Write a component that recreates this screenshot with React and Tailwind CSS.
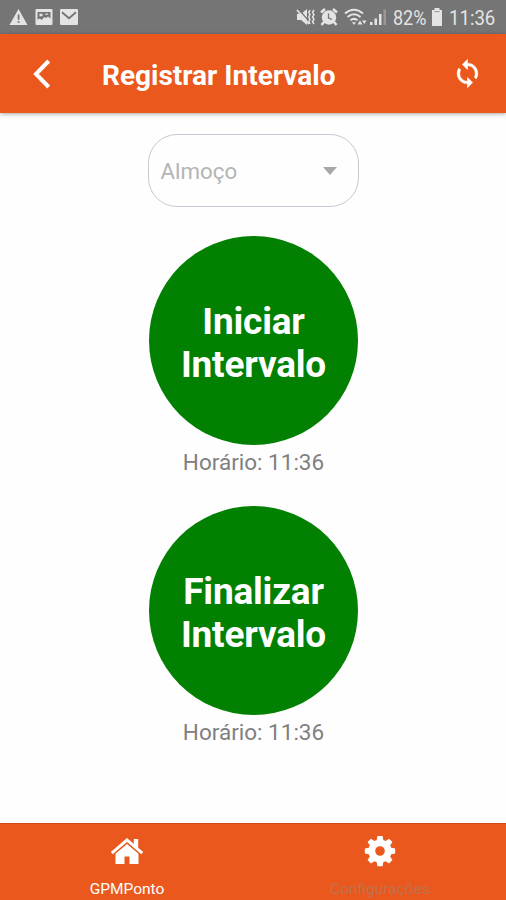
function StatusBar() {
  return (
    <div className="flex h-[34px] shrink-0 items-center bg-[#757575] text-[#e4e4e4]">
      <svg className="ml-[9px] h-[18px] w-[19px]" viewBox="0 0 19 18">
        <path d="M9.5 1 18.5 17H.5z" fill="currentColor" />
        <path d="M8.7 6.5h1.8v5.3H8.7zM8.7 13h1.8v1.8H8.7z" fill="#757575" />
      </svg>
      <svg className="ml-[7px] h-[18px] w-[18px]" viewBox="0 0 18 18">
        <rect x=".5" y="1" width="17" height="16" rx="1" fill="currentColor" />
        <path d="M2.5 4h13v6.500l-2.500-2-2 1.500-1.500-1-3 3-1.500-1.500-2.500 1z" fill="#757575" />
        <path d="M4.500 5.800h3v2.400h-3zM9.500 7l2.500-2 1.500 1.500z" fill="currentColor" />
      </svg>
      <svg className="ml-[6px] h-[18px] w-[20px]" viewBox="0 0 20 18">
        <rect x="1" y="1" width="18" height="16" rx="1.200" fill="currentColor" />
        <path d="m3 4.200 7 6 7-6" fill="none" stroke="#757575" strokeWidth="1.800" />
      </svg>
      <svg className="ml-[217px] h-[20px] w-[20px]" viewBox="0 0 20 20">
        <path d="M1 7h4l6-5v16l-6-5H1z" fill="currentColor" />
        <path d="m2.500 2 12 14" stroke="#757575" strokeWidth="1.200" />
        <path d="m1 3 12 14" stroke="currentColor" strokeWidth="1.800" />
        <path d="m14 3-1.200 2.300L14 7.600 12.800 10l1.200 2.300-1.200 2.300L14 17M18 3l-1.500 2.300L18 7.600 16.500 10l1.500 2.300-1.500 2.300L18 17" fill="none" stroke="currentColor" strokeWidth="1.500" />
      </svg>
      <svg className="ml-[4px] h-[20px] w-[18px]" viewBox="0 0 18 20">
        <circle cx="9" cy="10.500" r="7.200" fill="currentColor" />
        <path d="m1 5.500 4-3.500M17 5.500 13 2M4 15l-2.500 3M14 15l2.500 3" stroke="currentColor" strokeWidth="2.600" />
        <path d="M8.500 6.500v4.500l3.500 1.500" fill="none" stroke="#757575" strokeWidth="1.300" />
      </svg>
      <svg className="ml-[6px] h-[20px] w-[23px]" viewBox="0 0 23 20">
        <g fill="none" stroke="currentColor" strokeWidth="2">
          <path d="M1 6.500Q10-1 19 6.500" />
          <path d="M3.500 10Q10 4.500 16.500 10" />
          <path d="M6.500 13.300Q10 10.500 13.500 13.300" />
        </g>
        <path d="m8 15.300 2 2.700 2-2.700zM13.500 17.500l2.500-4 2.500 4zM18 13.500h4.500l-2.200 3.500z" fill="currentColor" />
      </svg>
      <svg className="ml-[2px] h-[20px] w-[18px]" viewBox="0 0 18 20">
        <path d="M1 15h2.500v3H1zM5.500 11.500H8V18H5.500zM10 7h2.500v11H10z" fill="currentColor" />
        <path d="M14.500 2.500H17V18h-2.500z" fill="#989898" />
      </svg>
      <span className="ml-[6px] w-[34px] origin-left scale-x-[.90] whitespace-nowrap pt-[2px] text-[20px] leading-none">82%</span>
      <svg className="ml-[4px] h-[20px] w-[12px]" viewBox="0 0 12 20">
        <path d="M3.500 1h5v2H11v16H1V3h2.500z" fill="currentColor" />
        <path d="M3.500 4.600h5" stroke="#959595" strokeWidth="1" />
      </svg>
      <span className="ml-[6px] origin-left scale-x-[.93] whitespace-nowrap pt-[2px] text-[20px] leading-none">11:36</span>
    </div>
  )
}

function Header() {
  return (
    <header className="z-10 flex h-[79px] shrink-0 items-center bg-[#eb581d] text-white shadow-[0_1px_4px_rgba(0,0,0,0.35)]">
      <svg className="ml-[32px] h-[30px] w-[20px]" viewBox="0 0 20 30" fill="none" stroke="currentColor" strokeWidth="4">
        <path d="M16.700 2 4 15l12.700 13" />
      </svg>
      <h1 className="ml-[50px] mt-[4px] w-[234px] whitespace-nowrap text-[28px] font-bold leading-none">Registrar Intervalo</h1>
      <svg className="ml-[116px] h-[31px] w-[31px]" viewBox="0 0 24 24" fill="currentColor" stroke="currentColor" strokeWidth=".4">
        <path d="M12 4V1L8 5l4 4V6c3.310 0 6 2.690 6 6 0 1.010-.25 1.970-.7 2.800l1.460 1.460A7.930 7.930 0 0 0 20 12c0-4.420-3.580-8-8-8zm0 14c-3.310 0-6-2.690-6-6 0-1.010.25-1.970.7-2.800L5.240 7.740A7.930 7.930 0 0 0 4 12c0 4.420 3.580 8 8 8v3l4-4-4-4v3z" />
      </svg>
    </header>
  )
}

function PunchButton({ action, time }) {
  return (
    <section className="flex h-[270px] flex-col items-center">
      <button className="flex h-[209px] w-[209px] shrink-0 flex-col items-center justify-center rounded-full bg-[#028002] pl-[1px] pt-[4px] text-[37px] font-bold leading-[43px] tracking-[-0.200px] text-white">
        <span>{action}</span>
        <span>Intervalo</span>
      </button>
      <p className="mt-[3px] pl-[1px] text-[22.500px] leading-[28px] text-[#808080]">Horário: {time}</p>
    </section>
  )
}

function BottomNav() {
  return (
    <nav className="grid h-[77px] shrink-0 grid-cols-2 border-t border-[#cf4a17] bg-[#eb581d] text-white">
      <div className="flex flex-col items-center pt-[12px]">
        <svg className="h-[30px] w-[34px]" viewBox="0 0 34 30" fill="currentColor">
          <path d="M17 2 .800 16l1.900 2.200L17 6l14.300 12.200 1.900-2.200-5-4.300V3h-4.400v4.900z" />
          <path d="M17 8 5.500 17.800V28h9v-7.500h5V28h9V17.800z" />
        </svg>
        <span className="mt-[15px] pl-[1px] text-[15.500px] leading-[16px]">GPMPonto</span>
      </div>
      <div className="flex flex-col items-center pt-[9px]">
        <svg className="h-[36px] w-[36px]" viewBox="0 0 24 24" fill="currentColor">
          <path fillRule="evenodd" d="m10.300 2-.5 2.600-1.600.7L6 3.800 3.700 6l1.500 2.200-.7 1.600-2.600.5v3.400l2.600.5.7 1.600L3.700 18 6 20.300l2.200-1.500 1.600.7.5 2.600h3.400l.5-2.600 1.600-.7 2.200 1.500 2.300-2.300-1.500-2.200.7-1.600 2.600-.5v-3.400l-2.600-.5-.7-1.600L20.300 6 18 3.800l-2.200 1.500-1.600-.7-.5-2.600zM12 8.800a3.200 3.200 0 1 1 0 6.400 3.200 3.200 0 0 1 0-6.400z" />
        </svg>
        <span className="mt-[12px] pl-[1px] text-[15.500px] leading-[16px] text-[#c0714d]">Configurações</span>
      </div>
    </nav>
  )
}

export default function App() {
  return (
    <div className="flex h-[900px] w-[506px] flex-col overflow-hidden bg-[#fefefe] font-[Roboto,sans-serif]">
      <StatusBar />
      <Header />
      <main className="flex min-h-0 flex-1 flex-col items-center pt-[21px]">
        <button className="mb-[29px] flex h-[73px] w-[211px] shrink-0 items-center justify-between rounded-[29px] border border-[#c8c8d2] pl-[12px] pr-[21px] text-[22.300px] text-[#b5b5b5]">
          <span className="pt-[3px]">Almoço</span>
          <svg className="h-[8px] w-[14px]" viewBox="0 0 14 8" fill="#a8a8a8">
            <path d="M0 0h14L7 8z" />
          </svg>
        </button>
        <PunchButton action="Iniciar" time="11:36" />
        <PunchButton action="Finalizar" time="11:36" />
      </main>
      <BottomNav />
    </div>
  )
}
